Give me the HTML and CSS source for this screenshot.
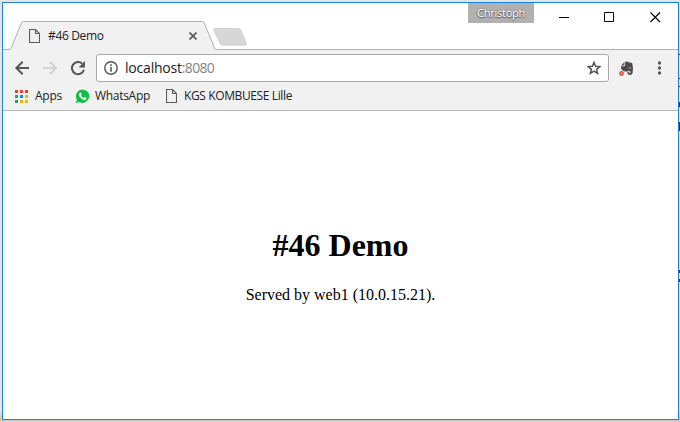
FILE: index.html
```html
<!DOCTYPE html>
<html lang="en">
<head>
<meta charset="utf-8">
<title>#46 Demo</title>
<link rel="stylesheet" href="styles.css">
</head>
<body>
<div class="window">
  <header class="titlebar">
    <svg class="tab-shape" width="250" height="29" viewBox="0 0 250 29">
      <path d="M0 28.5H6Q7.500 28.500 8.200 27L18.300 2Q19 .5 20.500 .5H199Q200.500 .5 201.200 2L211.500 27Q212.100 28.500 213.500 28.500H250V29H0z" fill="#f1f1f1"/>
      <path d="M0 28.500H6Q7.500 28.500 8.200 27L18.300 2Q19 .5 20.500 .5H199Q200.500 .5 201.200 2L211.500 27Q212.100 28.500 213.500 28.500H250" fill="none" stroke="#b1b1b1"/>
      <path d="M212 7.500H235.500Q237 7.500 237.700 9L243.300 22Q244 24.300 242 24.300H219.500Q218 24.300 217.200 22.500L210.700 9Q210 7.500 212 7.500z" fill="#d7d7d7" stroke="#c8c8c8" stroke-width=".7"/>
    </svg>
    <div class="tab">
      <svg class="page-icon" width="11" height="14" viewBox="0 0 11 14"><path d="M.5 .5H6.500L10.500 4.500V13.500H.5zM6.500 .5V4.500H10.500" fill="none" stroke="#5a5a5a" stroke-width="1.100"/></svg>
      <span class="tab-title">#46 Demo</span>
      <svg class="tab-close" width="8" height="8" viewBox="0 0 8 8"><path d="M.5 .5L7.500 7.500M7.500 .5L.5 7.500" stroke="#5a5a5a" stroke-width="1.700"/></svg>
    </div>
    <div class="user"><span>Christoph</span></div>
    <svg class="controls" width="103" height="12" viewBox="0 0 103 12" fill="none" stroke="#000">
      <path d="M0 5.500H10"/><path d="M45.500 .5H54.500V9.500H45.500z"/><path d="M91.500 .5L101 10M101 .5L91.500 10" stroke-width="1.100"/>
    </svg>
  </header>
  <div class="toolbar">
    <svg class="nav" width="74" height="16" viewBox="0 0 74 16" fill="none" stroke-width="2">
      <path d="M15 8H3M8.700 1.700L2.400 8L8.700 14.300" stroke="#555"/>
      <path d="M29 8H41M35.800 1.700L42.100 8L35.800 14.300" stroke="#d2d2d2"/>
      <path d="M68.300 3.700A6.100 6.100 0 1 0 69.900 9.700" stroke="#555"/><path d="M71 1V7.400H64.600z" fill="#555"/>
    </svg>
    <div class="address">
      <svg class="info" width="14" height="14" viewBox="0 0 14 14"><circle cx="7" cy="7" r="6.200" fill="none" stroke="#555" stroke-width="1.400"/><path d="M6.200 3.300H7.800V4.900H6.200zM6.200 6H7.800V10.700H6.200z" fill="#555"/></svg>
      <span class="url">localhost<span class="port">:8080</span></span>
      <svg class="star" width="14" height="14" viewBox="0 0 14 14"><path d="M7 1.400L8.600 5.200L12.900 5.600L9.600 8.300L10.600 12.400L7 10.200L3.400 12.400L4.400 8.300L1.100 5.600L5.400 5.200z" fill="none" stroke="#555" stroke-width="1.500"/></svg>
    </div>
    <svg class="elephant" width="15" height="16" viewBox="0 0 15 16">
      <path d="M2 4.500L5.500 1V3.500Q5.500 4.500 4.500 4.500z" fill="#555"/>
      <path d="M6.200 .8Q8.800 0 10 1.500Q12.500 1.300 13.300 2.500Q14.500 7 13.600 12Q13.200 14 11 14Q8.300 14 8.300 12Q8.300 10.200 10.600 10.400V11.500Q9.500 11.500 9.700 12.200Q11.800 12.800 11.700 11Q11.500 9.500 9.500 9.700L8.300 10.500Q3 10.500 2.300 7.700L1.900 5.300H5Q6.200 5.300 6.200 4z" fill="#4a4a4a"/>
      <path d="M9.500 7.300Q10.800 5.500 12.200 7.500" fill="none" stroke="#bbb"/>
      <circle cx="2.500" cy="12.500" r="2.400" fill="#d44f3e"/><circle cx="2.500" cy="12.500" r=".9" fill="#f6b4a8"/>
    </svg>
    <svg class="menu" width="4" height="14" viewBox="0 0 4 14" fill="#555"><circle cx="1.500" cy="2" r="1.650"/><circle cx="1.500" cy="7" r="1.650"/><circle cx="1.500" cy="12" r="1.650"/></svg>
  </div>
  <nav class="bookmarks">
    <svg class="apps" width="13" height="13" viewBox="0 0 13 13">
      <path d="M0 0H3V3H0zM5 0H8V3H5zM10 0H13V3H10z" fill="#ee3d32"/>
      <path d="M0 5H3V8H0zM0 10H3V13H0z" fill="#2da05b"/><path d="M5 5H8V8H5z" fill="#1685f5"/>
      <path d="M10 5H13V8H10zM5 10H8V13H5zM10 10H13V13H10z" fill="#f9ae0b"/>
    </svg>
    <span class="label label-apps">Apps</span>
    <svg class="whatsapp" width="15" height="15" viewBox="0 0 15 15">
      <path d="M7.600 0A7.200 7.200 0 1 1 4.300 13.800L0 15L1.300 10.900A7.200 7.200 0 0 1 7.600 0z" fill="#fff"/>
      <path d="M7.600 .5A6.700 6.700 0 1 1 4.400 13.100L.7 14.200L1.800 10.700A6.700 6.700 0 0 1 7.600 .5z" fill="#10c044"/>
      <path d="M4.600 3.800Q5.800 3.200 6.300 4.300L6.700 5.500L6 6.700Q6.900 8.300 8.700 9L9.700 8L11.400 8.900Q11.600 10.600 9.500 11Q7.800 11 5.800 9.100Q2.700 6 4.600 3.800z" fill="#fff"/>
    </svg>
    <span class="label label-whatsapp">WhatsApp</span>
    <svg class="page-icon bookmark-page" width="11" height="14" viewBox="0 0 11 14"><path d="M.5 .5H6.500L10.500 4.500V13.500H.5zM6.500 .5V4.500H10.500" fill="none" stroke="#5a5a5a" stroke-width="1.100"/></svg>
    <span class="label label-kgs">KGS KOMBUESE Lille</span>
  </nav>
  <main class="page">
    <h1>#46 Demo</h1>
    <p>Served by web1 (10.0.15.21).</p>
  </main>
</div>
<svg class="behind" width="2" height="422" viewBox="0 0 2 422"><path d="M0 54H2V55H0zM0 78H2V79H0zM0 86H2V87H0zM0 102H2V107H0zM0 122H2V131H0zM0 270H2V273H0zM0 279H2V282H0z" fill="#123451"/></svg>
</body>
</html>
```

FILE: styles.css
```css
* { box-sizing: border-box; }
html, body { margin: 0; height: 100%; }
body {
  padding: 2px 1px 2px 2px;
  overflow: hidden;
  position: relative;
  background: linear-gradient(#e4e4e4, #e4e4e4 410px, #c6c6c6 420px, #d4d4d4);
}
svg { display: block; flex: none; }
.window {
  width: 677px;
  height: 418px;
  border: 1px solid #1883d7;
  background: #fff;
  display: flex;
  flex-direction: column;
}
.titlebar {
  height: 47px;
  flex: none;
  position: relative;
  display: flex;
  align-items: flex-start;
  border-bottom: 1px solid #b1b1b1;
  font: 12px "Open Sans", sans-serif;
}
.tab-shape { position: absolute; left: 0; bottom: -1px; }
.tab {
  position: relative;
  display: flex;
  align-items: center;
  width: 197px;
  height: 28px;
  margin-top: 19px;
  padding-left: 26px;
}
.tab-title { margin: -1px 0 0 8px; letter-spacing: -.35px; color: #222; white-space: nowrap; }
.tab-close { margin-left: auto; margin-right: 3px; }
.user {
  width: 66px;
  height: 20px;
  margin-left: 268px;
  background: #b1b1b1;
  color: #fff;
  text-align: center;
  line-height: 20px;
  font-size: 11px;
  letter-spacing: -.25px;
  text-shadow: 0 0 2px #555, 0 1px 1px #555;
}
.controls { margin: 9px 0 0 25px; }
.toolbar {
  height: 35px;
  flex: none;
  background: #f1f1f1;
  display: flex;
  align-items: center;
  padding-left: 11px;
}
.nav { margin-top: 1px; }
.address {
  width: 513px;
  height: 28px;
  margin: 1px 0 0 8px;
  padding: 0 7px;
  display: flex;
  align-items: center;
  border: 1px solid #a9a9a9;
  border-radius: 3px;
  background: #fff;
}
.url { margin: -1px 0 0 7px; font: 14px "Open Sans", sans-serif; letter-spacing: -.2px; color: #222; }
.port { color: #858585; letter-spacing: -.7px; }
.star { margin-left: auto; }
.elephant { margin: 2px 0 0 10px; }
.menu { margin: 1px 0 0 24px; }
.bookmarks {
  height: 26px;
  flex: none;
  display: flex;
  align-items: center;
  padding: 0 0 3px 12px;
  background: #f1f1f1;
  border-bottom: 1px solid #b6b6b6;
}
.label { font: 12px "Open Sans", sans-serif; color: #222; white-space: nowrap; position: relative; top: -1px; }
.label-apps { width: 27px; margin-left: 7px; letter-spacing: -.25px; }
.whatsapp { margin-left: 13px; }
.label-whatsapp { width: 56px; margin-left: 5px; letter-spacing: -.3px; }
.bookmark-page { margin-left: 15px; }
.label-kgs { margin-left: 7px; letter-spacing: -.38px; }
.page {
  flex: 1;
  padding-top: 116px;
  text-align: center;
  font: 16px "Liberation Serif", serif;
  color: #000;
}
h1 { margin: 0; font-size: 32px; line-height: 37px; }
p { margin: 22px 0 0; line-height: 18px; }
.behind { position: absolute; left: 679px; top: 0; }
```
